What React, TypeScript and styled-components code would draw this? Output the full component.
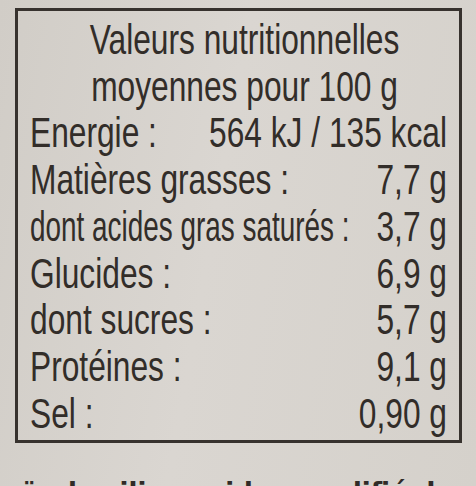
import styled, { createGlobalStyle } from "styled-components";

const GlobalStyle = createGlobalStyle`
  html, body {
    margin: 0;
    padding: 0;
    height: 486px;
    overflow: hidden;
    background: #d5d1cb;
  }
`;

const SQUEEZE = 0.755;

const Page = styled.div`
  width: 476px;
  height: 486px;
  overflow: hidden;
  background: linear-gradient(100deg, #d1cdc7 0%, #dad6d1 45%, #d5d1cb 100%);
  padding: 8px 0 0 15px;
  box-sizing: border-box;
  color: #322d29;
`;

const Label = styled.section`
  width: 447px;
  height: 435px;
  box-sizing: border-box;
  border: 3px solid #37322e;
  padding: 6px 15px 0 12px;
  font-family: "Liberation Sans", Arial, sans-serif;
  font-size: 42px;
  line-height: 46.7px;
`;

// the printed face is a condensed grotesque, so the whole table is narrowed
const Condensed = styled.div`
  width: ${417 / SQUEEZE}px;
  transform: scaleX(${SQUEEZE});
  transform-origin: left top;
`;

const Title = styled.h1`
  margin: 0;
  font: inherit;
  text-align: center;
  padding-left: 16px;
`;

const Row = styled.div`
  display: flex;
  justify-content: space-between;
  align-items: baseline;
  white-space: nowrap;
`;

const Name = styled.span<{ $tight?: number }>`
  display: inline-block;
  flex: 1 1 auto;
  min-width: 0;
  transform: scaleX(${(p) => p.$tight ?? 1});
  transform-origin: left center;
`;

const Value = styled.span`
  flex: 0 0 auto;
`;

const Footer = styled.p`
  margin: 34px 0 0 -35px;
  font-family: "DejaVu Sans", "Liberation Sans", sans-serif;
  font-weight: 700;
  font-size: 26px;
  line-height: 30px;
  white-space: nowrap;
  color: #302b27;
`;

const rows = [
  { name: "Energie :", value: "564 kJ / 135 kcal" },
  { name: "Matières grasses :", value: "7,7 g" },
  { name: "dont acides gras saturés :", value: "3,7 g", tight: 0.88 },
  { name: "Glucides :", value: "6,9 g" },
  { name: "dont sucres :", value: "5,7 g" },
  { name: "Protéines :", value: "9,1 g" },
  { name: "Sel :", value: "0,90 g" },
];

export default function App() {
  return (
    <Page>
      <GlobalStyle />
      <Label>
        <Condensed>
          <Title>
            Valeurs nutritionnelles
            <br />
            moyennes pour 100 g
          </Title>
          {rows.map((r) => (
            <Row key={r.name}>
              <Name $tight={r.tight}>{r.name}</Name>
              <Value>{r.value}</Value>
            </Row>
          ))}
        </Condensed>
      </Label>
      <Footer>maïs, basilic, amidon modifié de</Footer>
    </Page>
  );
}
